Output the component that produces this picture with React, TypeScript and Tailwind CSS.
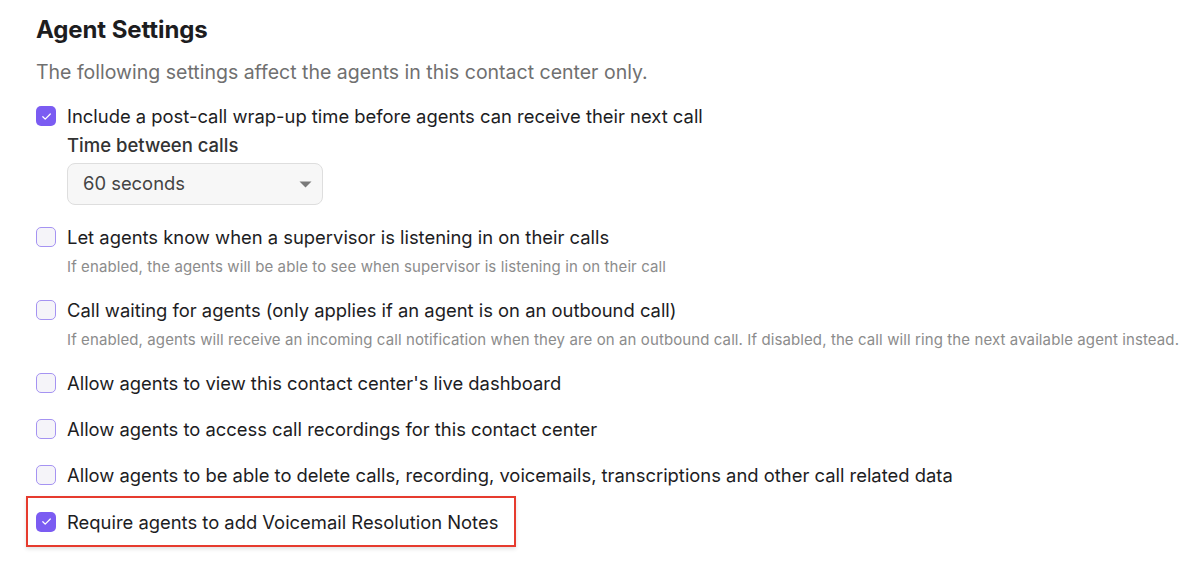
import { useState } from "react";

type Setting = {
  id: string;
  label: string;
  hint?: string;
};

const settings: Setting[] = [
  {
    id: "supervisor",
    label: "Let agents know when a supervisor is listening in on their calls",
    hint: "If enabled, the agents will be able to see when supervisor is listening in on their call",
  },
  {
    id: "callWaiting",
    label: "Call waiting for agents (only applies if an agent is on an outbound call)",
    hint: "If enabled, agents will receive an incoming call notification when they are on an outbound call. If disabled, the call will ring the next available agent instead.",
  },
  { id: "dashboard", label: "Allow agents to view this contact center's live dashboard" },
  { id: "recordings", label: "Allow agents to access call recordings for this contact center" },
  {
    id: "delete",
    label: "Allow agents to be able to delete calls, recording, voicemails, transcriptions and other call related data",
  },
];

function Checkbox({ checked, onChange }: { checked: boolean; onChange: () => void }) {
  return (
    <button
      type="button"
      onClick={onChange}
      className={
        checked
          ? "w-[20px] h-[20px] shrink-0 rounded-[5px] bg-[#7b5cf2] flex items-center justify-center"
          : "w-[20px] h-[20px] shrink-0 rounded-[5px] border-[1.5px] border-[#a593f2] bg-[#f5f4f9]"
      }
    >
      {checked && (
        <svg width="13" height="13" viewBox="0 0 12 12" fill="none">
          <path d="M2.6 6.2l2.2 2.2L9.5 3.7" stroke="#fff" strokeWidth="1.2" strokeLinecap="round" strokeLinejoin="round" />
        </svg>
      )}
    </button>
  );
}

export default function App() {
  const [wrapUp, setWrapUp] = useState<boolean>(true);
  const [notes, setNotes] = useState<boolean>(true);
  const [checked, setChecked] = useState<Record<string, boolean>>({});

  const toggle = (id: string) => setChecked({ ...checked, [id]: !checked[id] });

  return (
    <div className="w-full min-h-[575px] bg-white pl-[36px] pt-[15px] font-['Inter',sans-serif] text-[#1d1d1f]">
      <h2 className="text-[24px] leading-[30px] font-bold tracking-[-0.1px]">Agent Settings</h2>
      <p className="mt-[14px] text-[19.5px] leading-[26px] text-[#707070]">
        The following settings affect the agents in this contact center only.
      </p>

      <div className="mt-[18px] flex items-center gap-[11px] h-[26px]">
        <Checkbox checked={wrapUp} onChange={() => setWrapUp(!wrapUp)} />
        <span className="text-[18.4px] leading-[26px]">
          Include a post-call wrap-up time before agents can receive their next call
        </span>
      </div>
      <div className="ml-[31px]">
        <p className="mt-[3px] text-[18.5px] leading-[26px] font-medium text-[#333]">Time between calls</p>
        <div className="mt-[5px] w-[256px] h-[42px] rounded-lg border border-[#dedede] bg-[#f7f7f7] flex items-center justify-between pl-[15px] pr-[10px]">
          <span className="text-[18.4px] text-[#444]">60 seconds</span>
          <svg width="13" height="7" viewBox="0 0 13 7">
            <path d="M0.5 0.5h12L6.5 6.5z" fill="#7a7a7a" />
          </svg>
        </div>
      </div>

      <div className="mt-[19px] flex flex-col gap-[20px]">
        {settings.map((s) => (
          <div key={s.id}>
            <div className="flex items-center gap-[11px] h-[26px]">
              <Checkbox checked={!!checked[s.id]} onChange={() => toggle(s.id)} />
              <span className="text-[18.4px] leading-[26px]">{s.label}</span>
            </div>
            {s.hint && (
              <p className="mt-[7px] ml-[31px] text-[15px] leading-[20px] text-[#8c8c8c] tracking-[0.1px] whitespace-nowrap">
                {s.hint}
              </p>
            )}
          </div>
        ))}
      </div>

      <div className="mt-[8px] -ml-[10px] w-[490px] h-[51px] border-2 border-[#e63b2e] shadow-[0_2px_4px_rgba(0,0,0,0.12)] flex items-center gap-[11px] pl-[8px]">
        <Checkbox checked={notes} onChange={() => setNotes(!notes)} />
        <span className="text-[18.4px] leading-[26px]">Require agents to add Voicemail Resolution Notes</span>
      </div>
    </div>
  );
}
